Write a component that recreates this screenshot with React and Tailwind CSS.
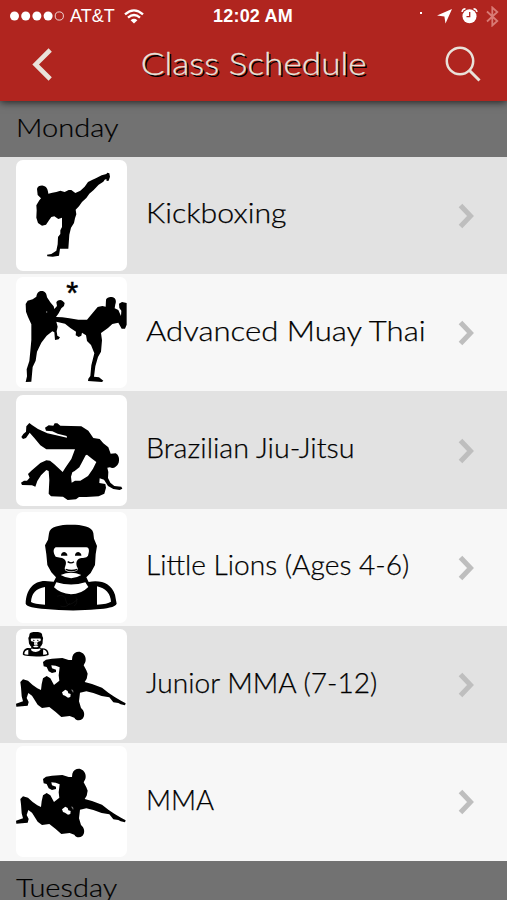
import React from 'react';

const Kick = () => (
  <path d="M81 102 C82 94 91 91 99 92 C108 93 114 101 115 116 L127 113 L139 111 L151 107 L164 111 L176 105 L184 105 L196 114 L211 107 L224 95 L234 81 L246 75 L259 69 L275 61 L289 57 L292 53 L298 55 L300 65 L296 77 L290 78 L289 72 L284 74 L280 80 L266 89 L251 105 L238 116 L229 129 L216 141 L207 154 L197 164 L199 178 L195 190 L192 204 L183 218 L178 239 L175 281 L150 281 L147 302 L128 305 L112 304 L111 299 L124 297 L139 287 L143 268 L144 246 L151 237 L151 226 L156 216 L156 188 L145 192 L133 184 L124 186 L117 196 L108 209 L96 212 L84 204 L79 188 L80 166 L79 151 L88 136 L93 130 L83 120 Z" />
);

const MuayThai = () => (
  <>
    <path d="M79 74 C81 61 87 57 95 57 C105 57 110 64 111 76 L122 92 L131 103 L133 111 L141 102 L139 91 C143 84 152 82 158 87 L164 93 L162 102 L154 109 L146 124 L138 135 L157 136 L178 139 L205 143 L231 143 L246 125 L263 105 L277 102 L287 104 L288 83 C291 76 300 73 309 76 C317 79 320 88 316 97 L314 109 L325 114 L333 132 L334 116 L328 108 L327 95 L336 90 L350 93 L350 158 L345 170 L335 170 L325 152 L307 156 L294 168 L273 183 L276 205 L273 239 L264 255 L256 283 L252 314 L267 316 L280 326 L276 330 L234 327 L235 320 L241 312 L244 280 L253 244 L243 219 L231 207 L228 190 L216 182 L214 191 L206 195 L197 190 L198 179 L181 168 L165 155 L139 149 L143 164 L140 178 L142 191 L150 196 L146 202 L135 204 L133 181 L127 178 L110 191 L94 212 L81 239 L77 266 L68 285 L64 329 L47 330 L51 313 L50 292 L58 267 L61 237 L64 204 L64 157 L54 135 L48 119 L47 96 L53 86 L68 82 Z" />
    <circle cx="110" cy="120" r="2" fill="#999" />
    <text x="187" y="95" textAnchor="middle" fontSize="92" fontWeight="400" stroke="#000" strokeWidth="1.5" fontFamily="Liberation Sans, sans-serif">*</text>
  </>
);

const JiuJitsu = () => (
  <>
    <path d="M34 141 L40 132 L48 125 L49 109 L58 99 L67 106 L84 117 L112 130 L145 137 L171 143 L170 138 L143 131 L127 124 L108 122 L105 113 L116 106 L130 107 L134 100 L142 100 L151 107 L214 109 L235 122 L250 144 L269 147 L280 160 L295 172 L302 191 L317 190 C326 195 329 206 326 218 C321 231 309 237 300 232 L292 233 L295 246 L294 264 L301 278 L313 288 L334 290 L337 296 L329 300 L310 297 L294 288 L282 269 L269 265 L268 279 L286 282 L288 293 L283 311 L266 319 L229 321 L207 321 L198 328 L173 330 L159 320 L123 319 L116 311 L118 270 L116 243 L109 240 L93 256 L82 273 L76 290 L66 286 L36 285 L33 278 L42 272 L51 272 L59 263 L54 252 L64 242 L91 219 L109 211 L120 212 L133 223 L158 246 L167 232 L184 207 L195 178 L109 178 L91 166 L73 144 L59 128 L48 144 L39 147 Z" />
    <path fill="#fff" d="M227 196 L216 217 L208 232 L194 243 L187 247 L183 260 L185 278 L195 272 L211 272 L234 258 L249 236 L259 216 L246 206 L231 194 Z" />
  </>
);

const Lion = () => (
  <>
    <path d="M117 79 C119 58 150 53 183 53 C216 53 247 58 250 78 L252 95 L261 117 L257 142 L255 174 L242 198 L229 211 L236 225 C274 218 304 230 315 263 L320 290 C316 301 289 304 260 307 C211 312 151 311 106 306 C74 303 49 299 47 290 C48 249 70 222 105 222 L131 224 L138 211 L124 196 L112 174 L109 142 L105 115 L114 98 Z" />
    <path fill="#fff" d="M137 121 H229 C239 122 238 133 234 146 C229 154 218 151 207 155 C198 160 197 173 203 183 C206 191 199 192 191 194 H174 C165 192 162 187 166 177 C171 164 166 154 151 152 L137 149 C130 139 128 126 137 121 Z" />
    <path d="M153 144 C155 133 168 132 172 143 L172 146 L153 146 Z M195 144 C197 133 210 132 214 143 L214 146 L195 146 Z" />
    <path fill="none" stroke="#000" strokeWidth="4" d="M173 164 Q183 171 192 164 M167 187 Q184 194 202 187" />
    <path fill="#fff" d="M152 204 Q183 190 214 204 Q184 223 152 204 Z M139 226 Q184 239 226 226 L235 240 Q213 262 183 262 Q151 260 132 241 Z M105 240 Q65 246 63 285 Q73 291 105 293 Z M261 238 Q300 247 303 284 Q293 291 261 293 Z" />
    <path fill="none" stroke="#222" strokeWidth="1" d="M141 268 Q165 258 168 282 T204 276 M151 297 Q169 304 180 288 M192 297 Q205 290 198 271" />
  </>
);

const Grapple = () => (
  <>
    <path d="M187 98 C190 88 200 82 211 84 C224 88 230 103 226 114 L221 124 L229 139 L233 149 L230 164 L224 174 L246 180 L276 191 L296 207 L314 219 L333 230 L347 238 L345 244 L332 241 L325 237 L310 235 L298 220 L275 216 L250 207 L229 202 L210 206 L207 232 L213 252 C224 261 226 276 217 285 C209 291 198 290 193 281 L179 276 L154 279 L137 264 L118 249 L96 252 L83 242 L66 215 L55 207 L50 222 L56 234 L53 245 L19 248 L18 239 L39 232 L35 217 L33 190 L31 174 L39 166 L54 170 L68 183 L82 193 L93 198 L95 181 L99 163 L110 156 L121 163 L132 183 L148 170 L146 154 L149 130 L137 125 L124 124 L126 133 L138 137 L138 144 L126 147 L116 142 L110 129 L101 127 L99 114 L108 107 L126 104 L157 102 L176 108 L186 108 Z" />
    <path fill="#fff" d="M156 205 L166 197 L173 201 L175 208 L182 210 L181 219 L174 221 L165 215 L159 213 Z" />
    <path fill="none" stroke="#fff" strokeWidth="1.5" d="M184 198 Q189 196 189 205" />
  </>
);

const JuniorGrapple = () => (
  <>
    <Grapple />
    <g transform="translate(25 9) scale(0.285)">
      <Lion />
    </g>
  </>
);

const classes = [
  { name: 'Kickboxing', art: Kick, stretch: 'scale-x-[1.08]' },
  { name: 'Advanced Muay Thai', art: MuayThai, stretch: 'scale-x-[1.11]' },
  { name: 'Brazilian Jiu-Jitsu', art: JiuJitsu, stretch: 'scale-x-[1.025]' },
  { name: 'Little Lions (Ages 4-6)', art: Lion, stretch: 'scale-x-[1.005]' },
  { name: 'Junior MMA (7-12)', art: JuniorGrapple, stretch: 'scale-x-[1.005]' },
  { name: 'MMA', art: Grapple, stretch: 'scale-x-[0.985]' },
];

const StatusBar = () => (
  <div className="grid grid-cols-3 items-center h-8 pl-[10px] pr-2 text-white font-['Liberation_Sans',sans-serif] text-[18px] leading-none">
    <div className="flex items-center">
      <svg width="54" height="10" viewBox="0 0 54 10" fill="#fff">
        <circle cx="4.5" cy="5" r="4.5" />
        <circle cx="15.7" cy="5" r="4.5" />
        <circle cx="26.9" cy="5" r="4.5" />
        <circle cx="38.1" cy="5" r="4.5" />
        <circle cx="49.3" cy="5" r="4.1" fill="none" stroke="#fff" strokeWidth="0.8" />
      </svg>
      <span className="ml-[6px]">AT&amp;T</span>
      <svg className="ml-[9px]" width="20" height="15" viewBox="0 0 20 15" fill="none" stroke="#fff" strokeWidth="2.3">
        <path d="M1 5.4 Q10 -2.6 19 5.4" />
        <path d="M4 8.7 Q10 3.4 16 8.7" />
        <path d="M10 14.5 L6.6 11.2 Q10 8.5 13.4 11.2 Z" fill="#fff" stroke="none" />
      </svg>
    </div>
    <span className="pr-[3px] text-center font-bold tracking-[0.2px] whitespace-nowrap">12:02 AM</span>
    <div className="flex items-center justify-end">
      <span className="size-[2px] bg-white mb-1.5 mr-[15px]" />
      <svg width="15" height="15" viewBox="0 0 15 15" fill="#fff">
        <path d="M15 0 L8.5 14.5 L7.4 7.5 L0 6.6 Z" />
      </svg>
      <svg className="ml-[9px]" width="17" height="16" viewBox="0 0 17 16">
        <circle cx="8.5" cy="8.3" r="7" fill="#fff" />
        <path d="M1 4 Q1.5 1 4.5 .8 M16 4 Q15.5 1 12.5 .8" fill="none" stroke="#fff" strokeWidth="1.4" />
        <path d="M8.7 4 V8.7 H5.5" fill="none" stroke="#b0251f" strokeWidth="1.3" />
      </svg>
      <svg className="ml-[8px]" width="13" height="21" viewBox="0 0 13 21" fill="none" stroke="#d97b75" strokeWidth="1.8">
        <path d="M1 5.5 L11.3 15 L6.3 19.5 V1.5 L11.3 6 L1 15.5" />
      </svg>
    </div>
  </div>
);

const Header = () => (
  <header className="relative z-10 h-[101.3px] bg-[#b0251f] shadow-[0_1px_8px_rgba(0,0,0,0.75)]">
    <StatusBar />
    <div className="flex items-center justify-between h-[64px] pl-[32px] pr-[26px]">
      <svg width="21" height="33" viewBox="0 0 21 33" fill="none" stroke="#e9e2da" strokeWidth="4.6">
        <path d="M18.2 2 L3.6 16.5 L18.2 31" />
      </svg>
      <h1 className="ml-[11px] mb-[3px] scale-x-[1.1] whitespace-nowrap text-[32px] leading-[40px] font-light text-[#e9e2da] [-webkit-text-stroke:0.3px_#e9e2da] [text-shadow:1.5px_1.5px_0_#000]">
        Class Schedule
      </h1>
      <svg className="mb-px" width="37" height="37" viewBox="0 0 37 37" fill="none" stroke="#e9e2da" strokeWidth="2.5">
        <circle cx="16" cy="16" r="13.2" />
        <path d="M25.5 25.5 L35.5 35.5" strokeWidth="3" />
      </svg>
    </div>
  </header>
);

const DayHeading = ({ children, className }) => (
  <div className={`bg-[#727272] pl-4 ${className}`}>
    <h2 className="w-fit origin-left scale-x-[1.14] text-[25.5px] leading-[53px] font-light text-black [-webkit-text-stroke:0.2px_#000]">
      {children}
    </h2>
  </div>
);

const ClassRow = ({ name, art: Art, stretch }) => (
  <li className="flex items-center h-[117.33px] pl-4 pr-[32px] odd:bg-[#e2e2e2] even:bg-[#f7f7f7]">
    <svg className="size-[111px] shrink-0 rounded-[7px] bg-white" viewBox="18 15 333 333">
      <Art />
    </svg>
    <span className={`ml-[19px] mb-[6px] origin-left whitespace-nowrap text-[28px] leading-[36px] font-light text-black [-webkit-text-stroke:0.25px_#000] ${stretch}`}>
      {name}
    </span>
    <svg className="mt-[1px] ml-auto" width="17" height="26" viewBox="0 0 17 26" fill="none" stroke="#bebebe" strokeWidth="5">
      <path d="M2.5 2.5 L12.5 13 L2.5 23.5" />
    </svg>
  </li>
);

const App = () => {
  return (
    <div className="w-[507px] h-[900px] overflow-hidden bg-[#727272] font-[Lato,sans-serif]">
      <Header />
      <DayHeading className="h-[55.4px]">Monday</DayHeading>
      <ul>
        {classes.map((item) => (
          <ClassRow key={item.name} {...item} />
        ))}
      </ul>
      <DayHeading className="h-[40px]">Tuesday</DayHeading>
    </div>
  );
};

export default App;
